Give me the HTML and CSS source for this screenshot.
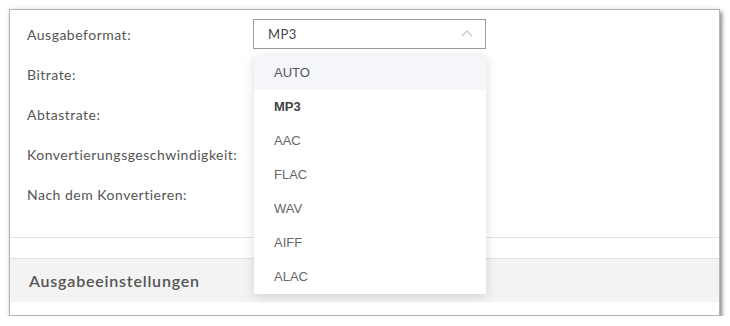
FILE: index.html
```html
<!DOCTYPE html>
<html lang="de">
<head>
    <meta charset="UTF-8">
    <title>Ausgabeeinstellungen</title>
    <link rel="stylesheet" href="styles.css">
</head>
<body>
    <div class="window">
        <div class="settings">
            <div class="row">
                <label>Ausgabeformat:</label>
                <div class="select-wrap">
                    <div class="select">
                        <span>MP3</span>
                        <svg class="chevron" width="12" height="8" viewBox="0 0 12 8">
                            <polyline points="1,7 6,2 11,7" fill="none" stroke="#c4c4c4" stroke-width="1.2"/>
                        </svg>
                    </div>
                    <ul class="dropdown">
                        <li class="hover">AUTO</li>
                        <li class="active">MP3</li>
                        <li>AAC</li>
                        <li>FLAC</li>
                        <li>WAV</li>
                        <li>AIFF</li>
                        <li>ALAC</li>
                    </ul>
                </div>
            </div>
            <div class="row"><label>Bitrate:</label></div>
            <div class="row"><label>Abtastrate:</label></div>
            <div class="row"><label>Konvertierungsgeschwindigkeit:</label></div>
            <div class="row"><label>Nach dem Konvertieren:</label></div>
        </div>
        <div class="section-head">Ausgabeeinstellungen</div>
    </div>
</body>
</html>
```

FILE: styles.css
```css
body {
    margin: 0;
    background-color: #fff;
    font-family: 'Lato', 'Open Sans', sans-serif;
    color: #555;
}
.window {
    margin: 9px 0 0 9px;
    width: 709px;
    height: 305px;
    border: 1px solid #b4b4b4;
    background-color: #fff;
    box-shadow: 2px 3px 4px rgba(0, 0, 0, 0.45), 0 -1px 6px rgba(0, 0, 0, 0.08);
}
.settings {
    padding: 9px 0 28px 17px;
    border-bottom: 1px solid #e2e2e2;
    display: flex;
    flex-direction: column;
    gap: 10px;
}
.row {
    height: 30px;
    display: flex;
    align-items: center;
}
.row label {
    width: 226px;
    font-size: 14px;
    letter-spacing: 0.5px;
}
.select-wrap {
    position: relative;
}
.select {
    width: 205px;
    height: 28px;
    border: 1px solid #9a9a9a;
    display: flex;
    align-items: center;
    justify-content: space-between;
    padding: 0 12px 0 14px;
    font-size: 13px;
    letter-spacing: 0.4px;
    color: #444;
}
.chevron {
    margin-top: -2px;
}
.dropdown {
    position: absolute;
    top: 37px;
    left: 1px;
    width: 232px;
    margin: 0;
    padding: 0;
    list-style: none;
    background-color: #fff;
    box-shadow: 0 2px 10px rgba(0, 0, 0, 0.15);
    z-index: 2;
}
.dropdown li {
    height: 34px;
    line-height: 34px;
    padding-left: 20px;
    font-family: 'Liberation Sans', Arial, sans-serif;
    font-size: 13px;
    color: #666;
}
.dropdown li.hover {
    background-color: #f5f6f9;
    color: #555;
}
.dropdown li.active {
    font-weight: bold;
    color: #444;
}
.section-head {
    margin-top: 20px;
    height: 43px;
    border-top: 1px solid #e2e2e2;
    background-color: #f3f3f3;
    padding-left: 19px;
    display: flex;
    align-items: center;
    font-size: 16px;
    letter-spacing: 0.8px;
    font-weight: 600;
    color: #555;
}
```
